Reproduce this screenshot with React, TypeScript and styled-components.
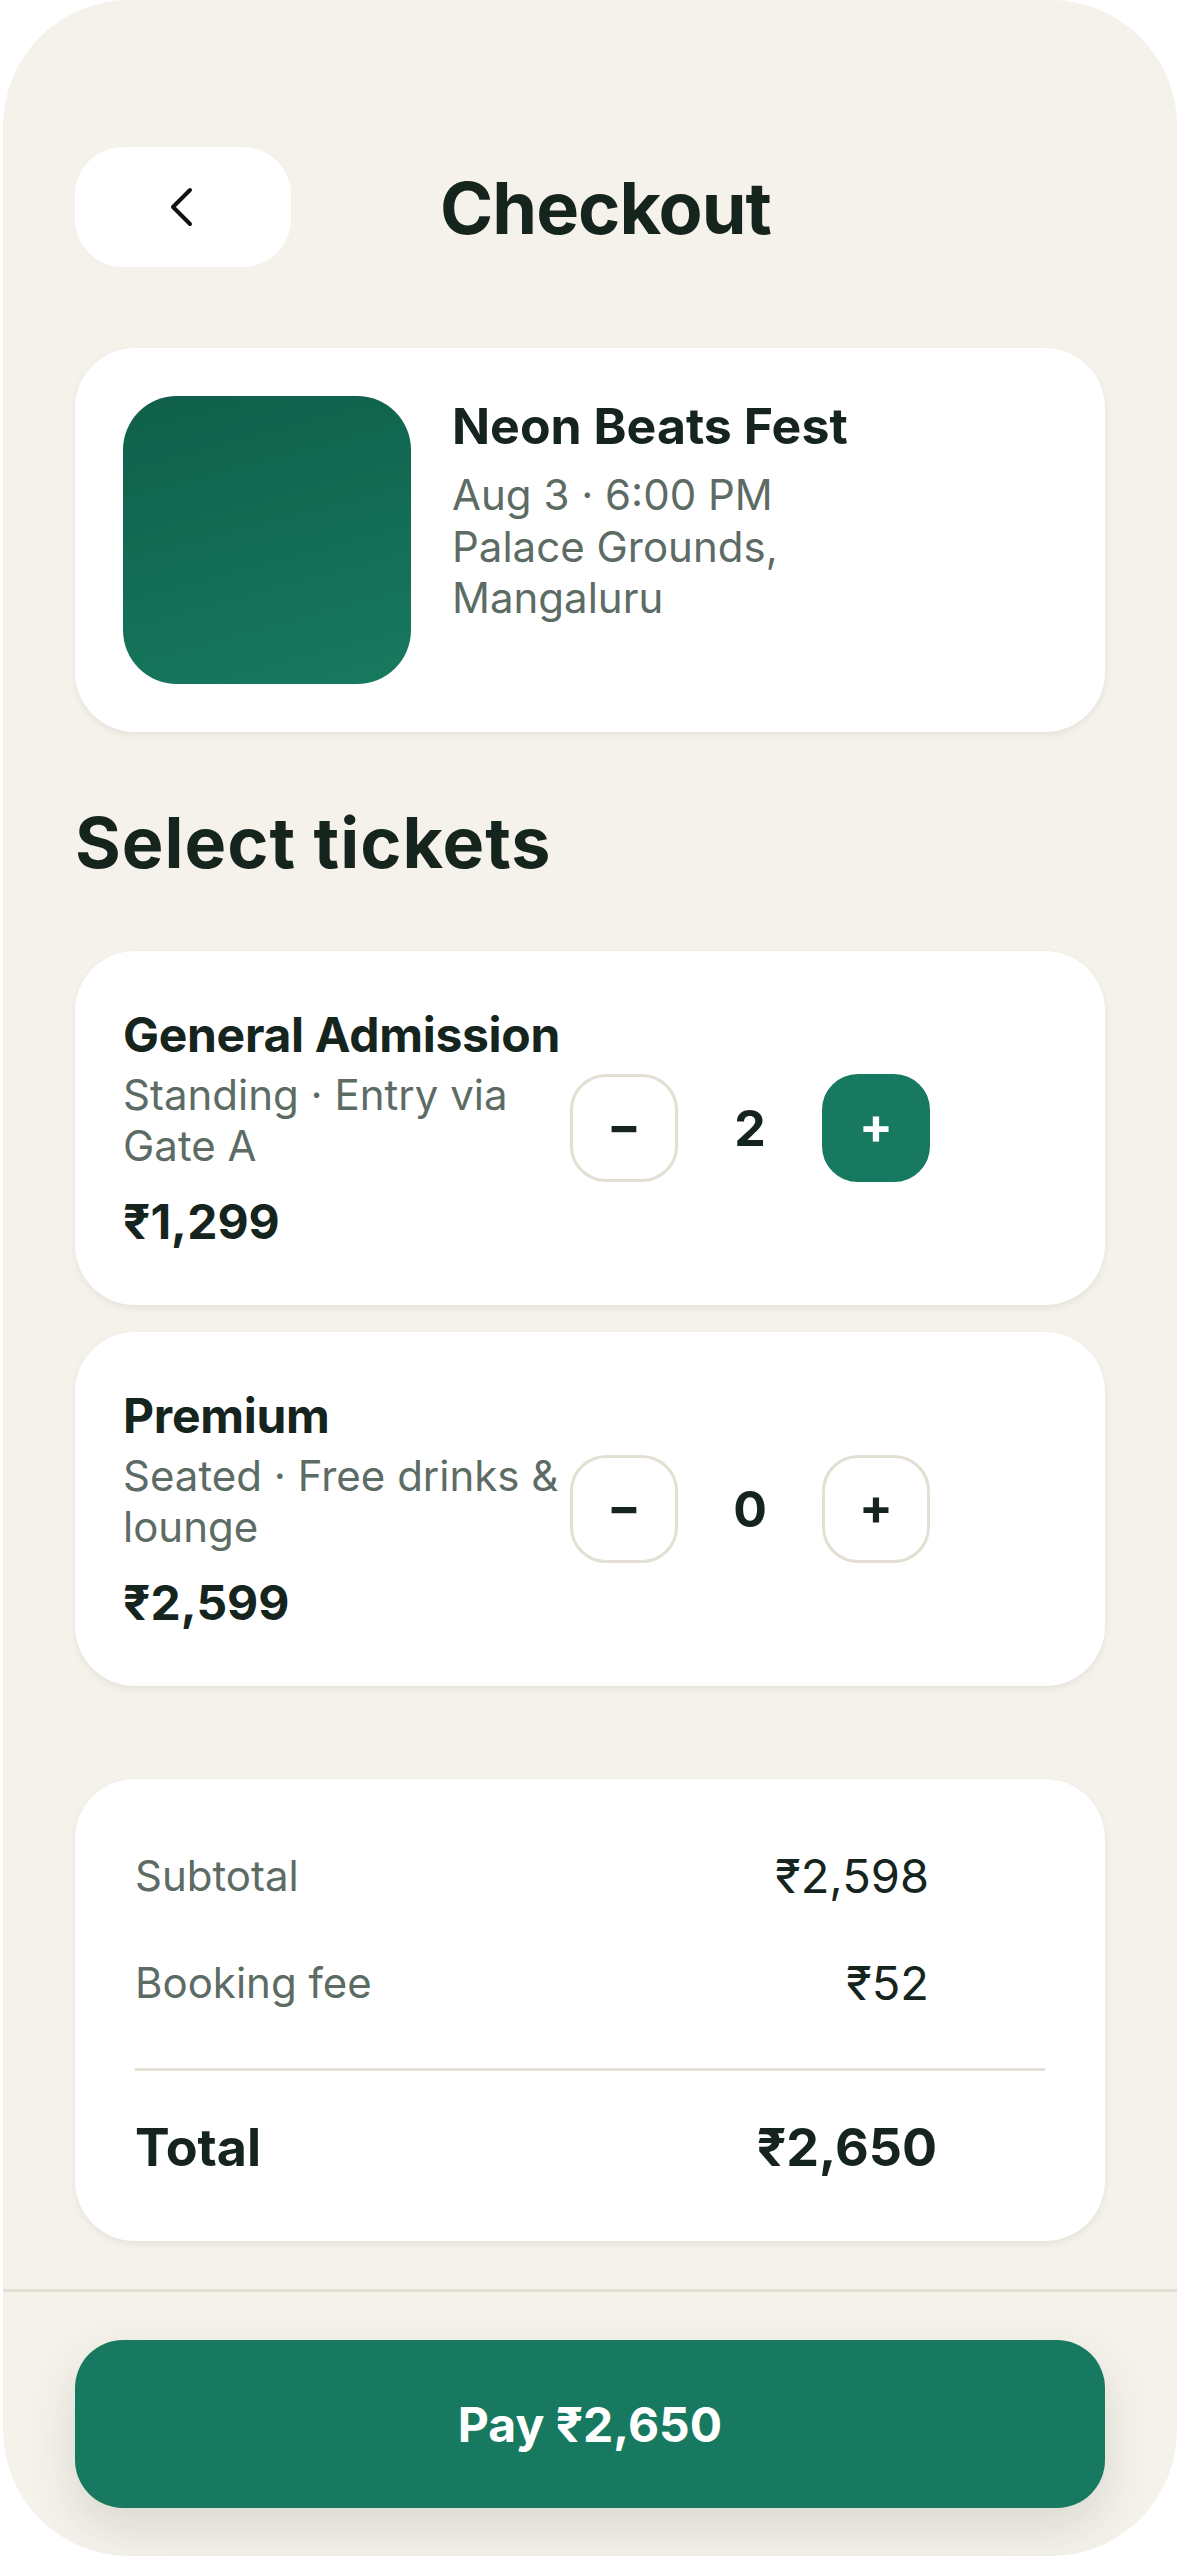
import React from "react";
import styled, { createGlobalStyle } from "styled-components";

const GlobalStyle = createGlobalStyle`
  html, body {
    margin: 0;
    padding: 0;
    background: #ffffff;
  }
  body {
    font-family: "Inter", "Noto Sans", sans-serif;
    color: #16241e;
  }
  * {
    box-sizing: border-box;
  }
`;

const Phone = styled.div`
  width: 1174px;
  height: 2556px;
  margin-left: 3px;
  background: #f5f2eb;
  border-radius: 126px;
  overflow: hidden;
  display: flex;
  flex-direction: column;
`;

const Content = styled.main`
  flex: 1;
  padding: 147px 72px 48px;
  display: flex;
  flex-direction: column;
`;

const Header = styled.header`
  display: grid;
  grid-template-columns: 216px 1fr 185px;
  align-items: center;
  height: 120px;
`;

const BackButton = styled.button`
  width: 216px;
  height: 120px;
  border: none;
  border-radius: 48px;
  background: #ffffff;
  display: flex;
  align-items: center;
  justify-content: center;
  padding: 0;
  cursor: pointer;
`;

const Title = styled.h1`
  margin: 0;
  text-align: center;
  font-size: 72px;
  font-weight: 700;
  letter-spacing: -1px;
  color: #16241e;
`;

const Card = styled.section<{ $pad?: string }>`
  background: #ffffff;
  border-radius: 60px;
  box-shadow: 0 3px 6px rgba(40, 45, 35, 0.08);
  padding: ${(p) => p.$pad || "48px"};
`;

const EventCard = styled(Card)`
  margin-top: 81px;
  display: flex;
  align-items: flex-start;
  gap: 41px;
`;

const Thumb = styled.div`
  width: 288px;
  height: 288px;
  flex-shrink: 0;
  border-radius: 54px;
  background: linear-gradient(165deg, #0f5f49 0%, #177a5f 100%);
`;

const EventInfo = styled.div`
  display: flex;
  flex-direction: column;
`;

const EventName = styled.h2`
  margin: 0;
  font-size: 50px;
  font-weight: 700;
  letter-spacing: 0;
  line-height: 1.2;
  color: #16241e;
`;

const Meta = styled.p`
  margin: 13px 0 0;
  font-size: 42px;
  line-height: 51.5px;
  color: #5d6b65;
`;

const SectionTitle = styled.h2`
  margin: 68px 0 66px;
  font-size: 70px;
  font-weight: 700;
  letter-spacing: 1px;
  color: #16241e;
`;

const TicketList = styled.div`
  display: flex;
  flex-direction: column;
  gap: 27px;
`;

const TicketCard = styled(Card)`
  display: flex;
  align-items: center;
  height: 354px;
`;

const TicketInfo = styled.div`
  flex: 1;
  min-width: 0;
`;

const TicketName = styled.h3`
  margin: 0;
  font-size: 48px;
  font-weight: 700;
  letter-spacing: -0.3px;
  color: #16241e;
`;

const TicketDesc = styled.p`
  margin: 5px 0 0;
  font-size: 42px;
  line-height: 51px;
  color: #5d6b65;
`;

const TicketPrice = styled.div`
  margin-top: 21px;
  font-size: 48px;
  font-weight: 700;
  color: #16241e;
`;

const Stepper = styled.div`
  display: flex;
  align-items: center;
  gap: 36px;
  margin-right: 127px;
`;

const StepButton = styled.button<{ $active?: boolean }>`
  width: 108px;
  height: 108px;
  border-radius: 36px;
  border: 3px solid ${(p) => (p.$active ? "#177a60" : "#e4dfd3")};
  background: ${(p) => (p.$active ? "#177a60" : "#ffffff")};
  color: ${(p) => (p.$active ? "#ffffff" : "#16241e")};
  font-family: "Inter", sans-serif;
  font-size: 50px;
  font-weight: 700;
  line-height: 1;
  padding: 0 0 4px;
  display: flex;
  align-items: center;
  justify-content: center;
  cursor: pointer;
`;

const Count = styled.span`
  width: 72px;
  text-align: center;
  font-size: 50px;
  font-weight: 700;
  color: #16241e;
`;

const SummaryCard = styled(Card)`
  margin-top: 93px;
  display: flex;
  flex-direction: column;
  padding: 60px 60px 58px;
`;

const Row = styled.div<{ $total?: boolean }>`
  display: flex;
  align-items: center;
  justify-content: space-between;
  min-height: 72px;
  padding-right: ${(p) => (p.$total ? "108px" : "116px")};
  & + & {
    margin-top: 35px;
  }
`;

const Label = styled.span<{ $total?: boolean }>`
  font-size: ${(p) => (p.$total ? "52px" : "42px")};
  font-weight: ${(p) => (p.$total ? 700 : 400)};
  color: ${(p) => (p.$total ? "#16241e" : "#5d6b65")};
`;

const Value = styled.span<{ $total?: boolean }>`
  font-size: ${(p) => (p.$total ? "52px" : "47px")};
  font-weight: ${(p) => (p.$total ? 700 : 400)};
  color: #16241e;
`;

const Divider = styled.hr`
  border: none;
  height: 3px;
  background: #e6e1d5;
  margin: 50px 0 40px;
`;

const Footer = styled.footer`
  border-top: 3px solid #e4dfd3;
  padding: 48px 72px;
`;

const PayButton = styled.button`
  width: 100%;
  height: 168px;
  border: none;
  border-radius: 48px;
  background: #177a60;
  color: #ffffff;
  font-family: "Inter", sans-serif;
  font-size: 48px;
  font-weight: 700;
  box-shadow: 0 20px 48px rgba(60, 55, 40, 0.14);
  cursor: pointer;
`;

const ChevronLeft = () => (
  <svg width="30" height="42" viewBox="0 0 30 42" fill="none">
    <polyline
      points="22,4 5,21 22,38"
      stroke="#111111"
      strokeWidth="4"
      strokeLinecap="round"
      strokeLinejoin="round"
    />
  </svg>
);

const tickets = [
  { name: "General Admission", desc: "Standing · Entry via Gate A", price: "₹1,299", qty: 2 },
  { name: "Premium", desc: "Seated · Free drinks & lounge", price: "₹2,599", qty: 0 },
];

export default function App() {
  return (
    <>
      <GlobalStyle />
      <Phone>
        <Content>
          <Header>
            <BackButton aria-label="Back">
              <ChevronLeft />
            </BackButton>
            <Title>Checkout</Title>
            <span />
          </Header>

          <EventCard>
            <Thumb />
            <EventInfo>
              <EventName>Neon Beats Fest</EventName>
              <Meta>
                Aug 3 · 6:00 PM
                <br />
                Palace Grounds,
                <br />
                Mangaluru
              </Meta>
            </EventInfo>
          </EventCard>

          <SectionTitle>Select tickets</SectionTitle>

          <TicketList>
            {tickets.map((t) => (
              <TicketCard key={t.name} $pad="0 48px">
                <TicketInfo>
                  <TicketName>{t.name}</TicketName>
                  <TicketDesc>{t.desc}</TicketDesc>
                  <TicketPrice>{t.price}</TicketPrice>
                </TicketInfo>
                <Stepper>
                  <StepButton>−</StepButton>
                  <Count>{t.qty}</Count>
                  <StepButton $active={t.qty > 0}>+</StepButton>
                </Stepper>
              </TicketCard>
            ))}
          </TicketList>

          <SummaryCard>
            <Row>
              <Label>Subtotal</Label>
              <Value>₹2,598</Value>
            </Row>
            <Row>
              <Label>Booking fee</Label>
              <Value>₹52</Value>
            </Row>
            <Divider />
            <Row $total>
              <Label $total>Total</Label>
              <Value $total>₹2,650</Value>
            </Row>
          </SummaryCard>
        </Content>

        <Footer>
          <PayButton>Pay ₹2,650</PayButton>
        </Footer>
      </Phone>
    </>
  );
}
